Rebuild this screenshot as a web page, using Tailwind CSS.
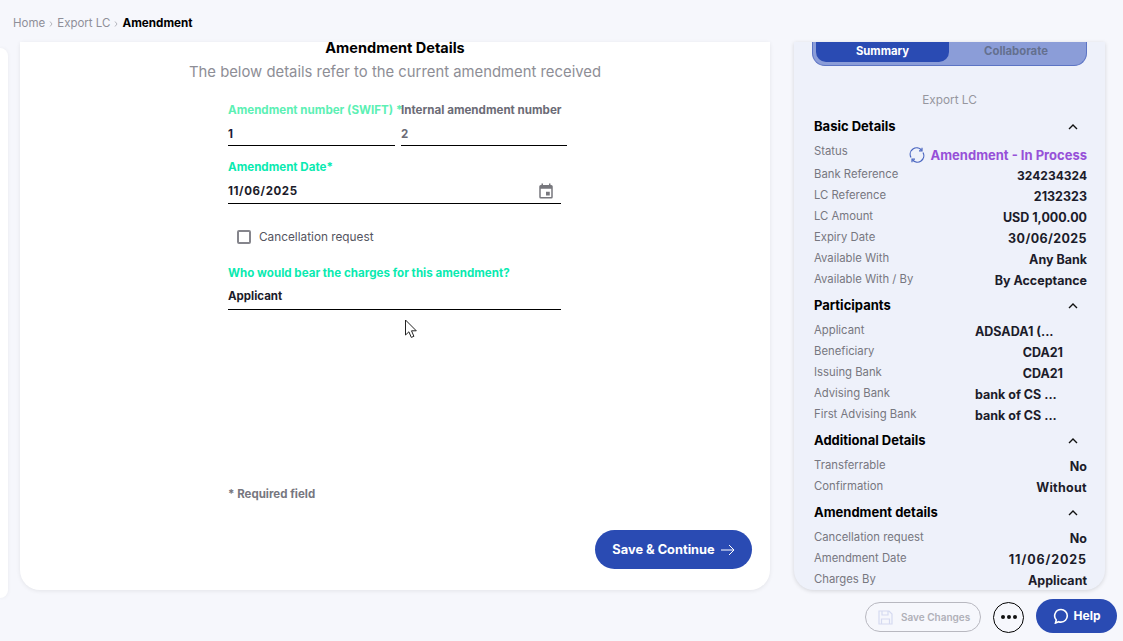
<!DOCTYPE html>
<html><head><meta charset="utf-8"><script src="https://cdn.jsdelivr.net/npm/@tailwindcss/browser@4"></script></head>
<body class="m-0">
<div class="w-[1123px] h-[641px] overflow-hidden bg-[#f6f7fc] font-['Inter',sans-serif] flex flex-col relative">
  <div class="h-[42px] shrink-0 pl-[13px] pt-[15px] flex items-start text-[11.5px] leading-[16px] text-[#8f8f99]">
    <span>Home</span><svg class="mx-[4px] mt-[6px]" width="4" height="6" viewBox="0 0 4 6" fill="none" stroke="#b5b5bd"><path d="M1 .5l2 2.500-2 2.500"/></svg><span>Export LC</span><svg class="mx-[4px] mt-[6px]" width="4" height="6" viewBox="0 0 4 6" fill="none" stroke="#b5b5bd"><path d="M1 .5l2 2.500-2 2.500"/></svg><span class="font-bold text-[11.7px] text-black">Amendment</span>
  </div>
  <div class="flex h-[548px] shrink-0">
    <div class="w-[8px] mt-[6px] h-[550px] bg-white rounded-r-[8px] shadow-[0_0_4px_rgba(0,0,0,0.06)] shrink-0"></div>
    <main class="ml-[12px] w-[750px] bg-white rounded-b-[20px] shadow-[0_1px_4px_rgba(0,0,0,0.08)] shrink-0 relative flex flex-col items-center">
      <h1 class="text-[14.5px] leading-[18px] font-bold text-black -mt-[3px]">Amendment Details</h1>
      <p class="text-[14.85px] leading-[20px] text-[#8e8e96] mt-[5px]">The below details refer to the current amendment received</p>
      <div class="w-[750px] pl-[208px] mt-[20px]">
        <div class="flex gap-[6px] w-[339px]">
          <div class="w-[167px] shrink-0">
            <div class="text-[11.6px] leading-[16px] font-bold text-[#5cf0b4] whitespace-nowrap">Amendment number (SWIFT) *</div>
            <div class="text-[11.5px] leading-[16px] font-bold text-[#1c1c3a] mt-[8px] h-[20px] border-b border-black">1</div>
          </div>
          <div class="w-[166px] shrink-0">
            <div class="text-[11.6px] leading-[16px] font-bold text-[#6b6b76] whitespace-nowrap">Internal amendment number</div>
            <div class="text-[11.5px] leading-[16px] font-bold text-[#6b6b76] mt-[8px] h-[20px] border-b border-black">2</div>
          </div>
        </div>
        <div class="w-[333px] mt-[13px]">
          <div class="text-[11.6px] leading-[16px] font-bold text-[#0aeab0]">Amendment Date*</div>
          <div class="text-[11.5px] leading-[16px] font-bold text-[#1c1c2a] mt-[8px] h-[21px] border-b border-black flex justify-between">
            <span class="tracking-[0.6px]">11/06/2025</span>
            <svg class="mr-[6px] -mt-[1px]" width="18" height="18" viewBox="0 0 24 24" fill="#77777d"><path d="M19 4h-1V2h-2v2H8V2H6v2H5a2 2 0 0 0-2 2v14a2 2 0 0 0 2 2h14a2 2 0 0 0 2-2V6a2 2 0 0 0-2-2zm0 16H5V9h14v11zM12 13h5v5h-5z"/></svg>
          </div>
        </div>
        <label class="flex items-center ml-[9px] mt-[25px] h-[16px]">
          <span class="w-[14px] h-[14px] border-2 border-[#85858c] rounded-[2px] bg-white"></span>
          <span class="ml-[8px] mt-[1px] text-[11.8px] text-[#55555f]">Cancellation request</span>
        </label>
        <div class="w-[333px] mt-[20px]">
          <div class="text-[11.6px] leading-[16px] font-bold text-[#0aeab0] whitespace-nowrap">Who would bear the charges for this amendment?</div>
          <div class="text-[11.5px] leading-[16px] font-bold text-[#1c1c2a] mt-[7px] h-[22px] border-b border-black">Applicant</div>
        </div>
        <svg class="ml-[176px] mt-[9px]" width="14" height="21" viewBox="0 0 14 21"><path d="M1.500 1v15l3.400-3.200 2.400 5.600 2.600-1.100-2.400-5.500h4.800z" fill="#fff" stroke="#222" stroke-width="1"/></svg>
        <div class="text-[11.5px] leading-[16px] font-bold text-[#77777f] mt-[146px]">* Required field</div>
      </div>
      <button class="absolute left-[575px] top-[488px] w-[157px] h-[39px] rounded-full bg-[#2a4bb3] text-white text-[12.8px] font-bold flex items-center justify-center gap-[6px] pt-[1px]">Save &amp; Continue
        <svg width="14" height="12" viewBox="0 0 14 12" fill="none" stroke="#fff" stroke-width="1"><path d="M0 6h13M8 1l5 5-5 5"/></svg>
      </button>
    </main>
    <aside class="ml-[24px] w-[311px] bg-[#eef1fa] rounded-b-[20px] shadow-[0_1px_4px_rgba(0,0,0,0.14)] shrink-0 pl-[20px] pr-[18px] overflow-hidden">
      <div class="h-[24px] w-[275px] -ml-[2px] rounded-b-[13px] bg-[#8b9dd8] border-x border-b border-[#5c74c4] flex text-[11.3px] font-bold">
        <div class="w-[133px] h-[20px] ml-[3px] rounded-b-[10px] bg-[#2a4bb3] text-white flex items-center justify-center pb-[1px]">Summary</div>
        <div class="w-[134px] h-[20px] flex items-center justify-center text-[#64708f] pb-[1px]">Collaborate</div>
      </div>
      <div class="text-center text-[11.8px] leading-[16px] text-[#96969e] mt-[26px] pr-[2px]">Export LC</div>
      <section class="mt-[10px]">
        <div class="flex justify-between items-center h-[18px] text-[13px] font-bold text-black"><span>Basic Details</span><svg class="mr-[9px]" width="10" height="6" viewBox="0 0 10 6" fill="none" stroke="#111" stroke-width="1.4"><path d="M1 5l4-4 4 4"/></svg></div>
        <div class="mt-[8px] flex flex-col text-[11.3px] leading-[14px]">
          <div class="h-[23px] flex justify-between"><span class="text-[#77777f]">Status</span><span class="flex items-center gap-[6px] h-[20px] mt-[1px] text-[13px] font-bold text-[#9650d8]"><svg width="16" height="16" viewBox="0 0 16 16" fill="none" stroke="#4a66c0" stroke-width="1.2"><path d="M2 10.500A6.500 6.500 0 0 1 12.500 3"/><path d="M14 5.500A6.500 6.500 0 0 1 3.500 13"/><path d="M13 .8v3h-3M3 15.200v-3h3"/></svg>Amendment - In Process</span></div>
          <div class="h-[21px] flex justify-between"><span class="text-[#77777f]">Bank Reference</span><span class="mt-[1px] text-[12px] leading-[16px] font-bold text-[#1c1c2a]">324234324</span></div>
          <div class="h-[21px] flex justify-between"><span class="text-[#77777f]">LC Reference</span><span class="mt-[2px] text-[12.500px] font-bold text-[#1c1c2a]">2132323</span></div>
          <div class="h-[21px] flex justify-between"><span class="text-[#77777f]">LC Amount</span><span class="mt-[2px] text-[12.500px] font-bold text-[#1c1c2a]">USD 1,000.00</span></div>
          <div class="h-[21px] flex justify-between"><span class="text-[#77777f]">Expiry Date</span><span class="mt-[2px] text-[12.500px] tracking-[0.4px] font-bold text-[#1c1c2a]">30/06/2025</span></div>
          <div class="h-[21px] flex justify-between"><span class="text-[#77777f]">Available With</span><span class="mt-[2px] text-[12.500px] font-bold text-[#1c1c2a]">Any Bank</span></div>
          <div class="h-[21px] flex justify-between"><span class="text-[#77777f]">Available With / By</span><span class="mt-[2px] text-[12.500px] font-bold text-[#1c1c2a]">By Acceptance</span></div>
        </div>
      </section>
      <section class="mt-[4px]">
        <div class="flex justify-between items-center h-[18px] text-[13px] font-bold text-black"><span>Participants</span><svg class="mr-[9px]" width="10" height="6" viewBox="0 0 10 6" fill="none" stroke="#111" stroke-width="1.4"><path d="M1 5l4-4 4 4"/></svg></div>
        <div class="mt-[8px] flex flex-col text-[11.3px] leading-[14px]">
          <div class="h-[21px] flex"><span class="w-[161px] text-[#77777f]">Applicant</span><span class="mt-[2px] text-[12.500px] font-bold text-[#1c1c2a] whitespace-nowrap">ADSADA1 (...</span></div>
          <div class="h-[21px] flex"><span class="w-[161px] text-[#77777f]">Beneficiary</span><span class="mt-[2px] w-[88px] text-right text-[12.500px] font-bold text-[#1c1c2a]">CDA21</span></div>
          <div class="h-[21px] flex"><span class="w-[161px] text-[#77777f]">Issuing Bank</span><span class="mt-[2px] w-[88px] text-right text-[12.500px] font-bold text-[#1c1c2a]">CDA21</span></div>
          <div class="h-[21px] flex"><span class="w-[161px] text-[#77777f]">Advising Bank</span><span class="mt-[2px] text-[12.500px] font-bold text-[#1c1c2a] whitespace-nowrap">bank of CS ...</span></div>
          <div class="h-[21px] flex"><span class="w-[161px] text-[#77777f]">First Advising Bank</span><span class="mt-[2px] text-[12.500px] font-bold text-[#1c1c2a] whitespace-nowrap">bank of CS ...</span></div>
        </div>
      </section>
      <section class="mt-[4px]">
        <div class="flex justify-between items-center h-[18px] text-[13px] font-bold text-black"><span>Additional Details</span><svg class="mr-[9px]" width="10" height="6" viewBox="0 0 10 6" fill="none" stroke="#111" stroke-width="1.4"><path d="M1 5l4-4 4 4"/></svg></div>
        <div class="mt-[8px] flex flex-col text-[11.3px] leading-[14px]">
          <div class="h-[21px] flex justify-between"><span class="text-[#77777f]">Transferrable</span><span class="mt-[2px] text-[12.500px] font-bold text-[#1c1c2a]">No</span></div>
          <div class="h-[21px] flex justify-between"><span class="text-[#77777f]">Confirmation</span><span class="mt-[2px] text-[12.500px] tracking-[0.3px] font-bold text-[#1c1c2a]">Without</span></div>
        </div>
      </section>
      <section class="mt-[4px]">
        <div class="flex justify-between items-center h-[18px] text-[13px] font-bold text-black"><span>Amendment details</span><svg class="mr-[9px]" width="10" height="6" viewBox="0 0 10 6" fill="none" stroke="#111" stroke-width="1.4"><path d="M1 5l4-4 4 4"/></svg></div>
        <div class="mt-[8px] flex flex-col text-[11.3px] leading-[14px]">
          <div class="h-[21px] flex justify-between"><span class="text-[#77777f]">Cancellation request</span><span class="mt-[2px] text-[12.500px] font-bold text-[#1c1c2a]">No</span></div>
          <div class="h-[21px] flex justify-between"><span class="text-[#77777f]">Amendment Date</span><span class="mt-[2px] text-[12.500px] tracking-[0.9px] font-bold text-[#1c1c2a]">11/06/2025</span></div>
          <div class="h-[21px] flex justify-between"><span class="text-[#77777f]">Charges By</span><span class="mt-[2px] text-[12.500px] font-bold text-[#1c1c2a]">Applicant</span></div>
        </div>
      </section>
    </aside>
  </div>
  <div class="flex items-center justify-end pr-[6px] mt-[9px] h-[34px]">
    <button class="w-[116px] h-[30px] mt-[2px] rounded-full border border-[#b8b8c0] flex items-center pl-[12px] gap-[8px] text-[10px] font-semibold text-[#b0b0b8] whitespace-nowrap">
      <svg width="15" height="15" viewBox="0 0 15 15" fill="none" stroke="#d5daf0" stroke-width="1.2"><path d="M1 1h10l3 3v10H1zM4 1v4h6V1M3.500 14V9h8v5"/></svg>Save Changes
    </button>
    <button class="ml-[12px] w-[31px] h-[31px] mt-[2px] rounded-full border border-black flex items-center justify-center gap-[2px]"><span class="w-[4px] h-[4px] rounded-full bg-[#111]"></span><span class="w-[4px] h-[4px] rounded-full bg-[#111]"></span><span class="w-[4px] h-[4px] rounded-full bg-[#111]"></span></button>
    <button class="ml-[12px] w-[81px] h-[34px] rounded-full bg-[#2a4bb3] text-white text-[12px] font-bold flex items-center justify-center gap-[5px]">
      <svg width="16" height="16" viewBox="0 0 16 16" fill="none" stroke="#fff" stroke-width="1.6"><path d="M8 1.500a6.300 6.300 0 0 1 0 12.600c-1 0-1.500 0-2.200-.4L2.500 15l.8-3A6.300 6.300 0 0 1 8 1.500z"/></svg>Help
    </button>
  </div>
</div>
</body></html>
